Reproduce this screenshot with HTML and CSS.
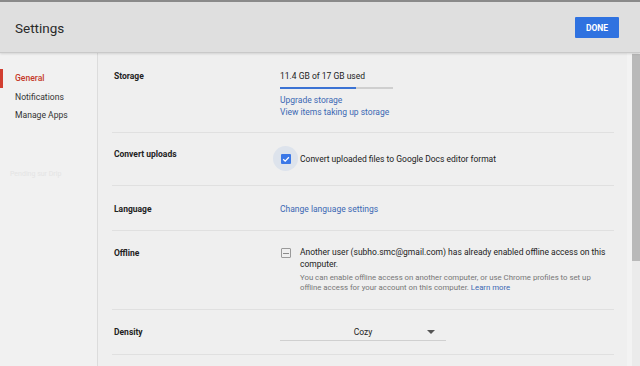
FILE: index.html
```html
<!DOCTYPE html>
<html>
<head>
<meta charset="utf-8">
<link rel="stylesheet" href="styles.css">
</head>
<body>
<div class="app">
  <header class="topbar">
    <h1 class="title">Settings</h1>
    <button class="done">DONE</button>
  </header>
  <div class="body">
    <nav class="sidebar">
      <a class="nav-item active">General</a>
      <a class="nav-item">Notifications</a>
      <a class="nav-item">Manage Apps</a>
      <span class="ghost">Pending sur Drip</span>
    </nav>
    <main class="content">
      <section class="row row-storage">
        <div class="label">Storage</div>
        <div class="value">
          <div class="text">11.4 GB of 17 GB used</div>
          <div class="bar"><div class="bar-fill" style="width:67%"></div></div>
          <a class="link">Upgrade storage</a>
          <a class="link">View items taking up storage</a>
        </div>
      </section>
      <section class="row row-convert">
        <div class="label">Convert uploads</div>
        <div class="value check-line">
          <span class="halo"><span class="cb checked">
            <svg viewBox="0 0 10 10" width="10" height="10"><path d="M2.2 5.2 L4.2 7.1 L7.9 3.2" fill="none" stroke="#fff" stroke-width="1.3"/></svg>
          </span></span>
          <span class="text">Convert uploaded files to Google Docs editor format</span>
        </div>
      </section>
      <section class="row row-lang">
        <div class="label">Language</div>
        <div class="value"><a class="link">Change language settings</a></div>
      </section>
      <section class="row row-offline">
        <div class="label">Offline</div>
        <div class="value offline">
          <span class="cb indeterminate"><span class="dash"></span></span>
          <div class="offline-text">
            <p class="text">Another user (subho.smc@gmail.com) has already enabled offline access on this computer.</p>
            <p class="hint">You can enable offline access on another computer, or use Chrome profiles to set up offline access for your account on this computer. <a class="link">Learn more</a></p>
          </div>
        </div>
      </section>
      <section class="row row-density">
        <div class="label">Density</div>
        <div class="value">
          <div class="select"><span class="select-text">Cozy</span><span class="arrow"></span></div>
        </div>
      </section>
    </main>
    <div class="scrollbar"><div class="thumb"></div></div>
  </div>
</div>
</body>
</html>
```

FILE: styles.css
```css
* { box-sizing: border-box; }
html, body {
  margin: 0;
  padding: 0;
  width: 640px;
  height: 366px;
  overflow: hidden;
  font-family: Roboto, "Liberation Sans", sans-serif;
  color: #222;
  background: #efefef;
}
.app { display: flex; flex-direction: column; height: 366px; }
.topbar {
  height: 53px;
  flex: none;
  border-top: 2px solid #8a8a8a;
  background: #dfdfdf;
  border-bottom: 1px solid #c9c9c9;
  box-shadow: 0 1px 2px rgba(0,0,0,0.12);
  display: flex;
  align-items: center;
  justify-content: space-between;
  padding: 0 21px 0 15px;
  position: relative;
  z-index: 1;
}
.title {
  margin: 0;
  font-size: 13.5px;
  font-weight: 400;
  color: #2a2a2a;
  padding-top: 1px;
}
.done {
  border: none;
  background: #2f72e0;
  color: #fff;
  font-family: Roboto, "Liberation Sans", sans-serif;
  font-weight: 700;
  font-size: 8.5px;
  width: 44px;
  height: 21px;
  padding: 0;
  border-radius: 1px;
  margin-top: 1px;
}
.body { display: flex; flex: 1; min-height: 0; }
.sidebar {
  width: 98px;
  flex: none;
  background: #f1f1f1;
  border-right: 1px solid #dcdcdc;
  box-shadow: 1px 0 0 #f7f7f7;
  display: flex;
  flex-direction: column;
  padding-top: 16px;
}
.nav-item {
  display: block;
  font-size: 8.6px;
  line-height: 18.5px;
  padding-left: 15px;
  color: #333;
}
.nav-item.active {
  color: #c53929;
  font-weight: 500;
  border-left: 3px solid #d23f31;
  padding-left: 12px;
}
.ghost {
  margin-top: 45px;
  padding-left: 10px;
  font-size: 7px;
  color: #e4e4e4;
}
.content {
  flex: 1;
  padding: 0 13px 0 14px;
  background: #efefef;
}
.row {
  display: grid;
  grid-template-columns: 166px 1fr;
  border-bottom: 1px solid #e0e0e0;
  padding: 16px 0 15px 2px;
}
.label {
  font-size: 8.5px;
  font-weight: 700;
  line-height: 12px;
  color: #222;
}
.value { font-size: 8.5px; line-height: 12px; }
.text { color: #222; }
.link { display: block; color: #3b68b3; }
.bar {
  width: 113px;
  height: 2px;
  background: #cfcfcf;
  margin: 5px 0 5px;
}
.bar-fill { height: 2px; background: #3b73d4; }
.row-storage { padding-top: 17px; padding-bottom: 14px; }
.row-convert { padding-top: 14px; padding-bottom: 14px; }
.row-convert .label { margin-top: 1px; }
.check-line { display: flex; align-items: center; margin-top: -1px; margin-left: -7px; }
.halo {
  width: 25px;
  height: 25px;
  border-radius: 50%;
  background: #dde3ec;
  display: flex;
  align-items: center;
  justify-content: center;
  margin-right: 2px;
}
.cb {
  width: 10px;
  height: 10px;
  display: inline-flex;
  align-items: center;
  justify-content: center;
  flex: none;
}
.cb.checked { background: #3b78e7; border-radius: 1px; }
.cb.indeterminate {
  border: 1px solid #9a9a9a;
  border-radius: 1px;
  margin: 1px 9px 0 1px;
}
.dash { width: 6px; height: 1px; background: #8a8a8a; }
.row-lang { padding-top: 17px; padding-bottom: 15px; }
.row-offline { padding-top: 16px; padding-bottom: 16px; }
.offline { display: flex; align-items: flex-start; }
.offline-text p { margin: 0; }
.offline-text .text { line-height: 12px; margin-top: -1px; padding-right: 6px; }
.hint {
  color: #777;
  font-size: 7.8px;
  line-height: 10px;
  margin-top: 3px !important;
  padding-right: 10px;
}
.hint .link { display: inline; }
.row-density { padding-top: 16px; padding-bottom: 13px; }
.select {
  width: 166px;
  height: 15px;
  border-bottom: 1px solid #d0d0d0;
  position: relative;
  text-align: center;
  font-size: 8.5px;
  line-height: 12px;
}
.arrow {
  position: absolute;
  right: 11px;
  top: 4px;
  width: 0;
  height: 0;
  border-left: 4px solid transparent;
  border-right: 4px solid transparent;
  border-top: 4px solid #555;
}
.scrollbar {
  width: 13px;
  flex: none;
  background: #ebebeb;
  border-left: 5px solid #f3f3f3;
  padding-top: 1px;
}
.thumb { height: 207px; background: #b9b9b9; }
```
